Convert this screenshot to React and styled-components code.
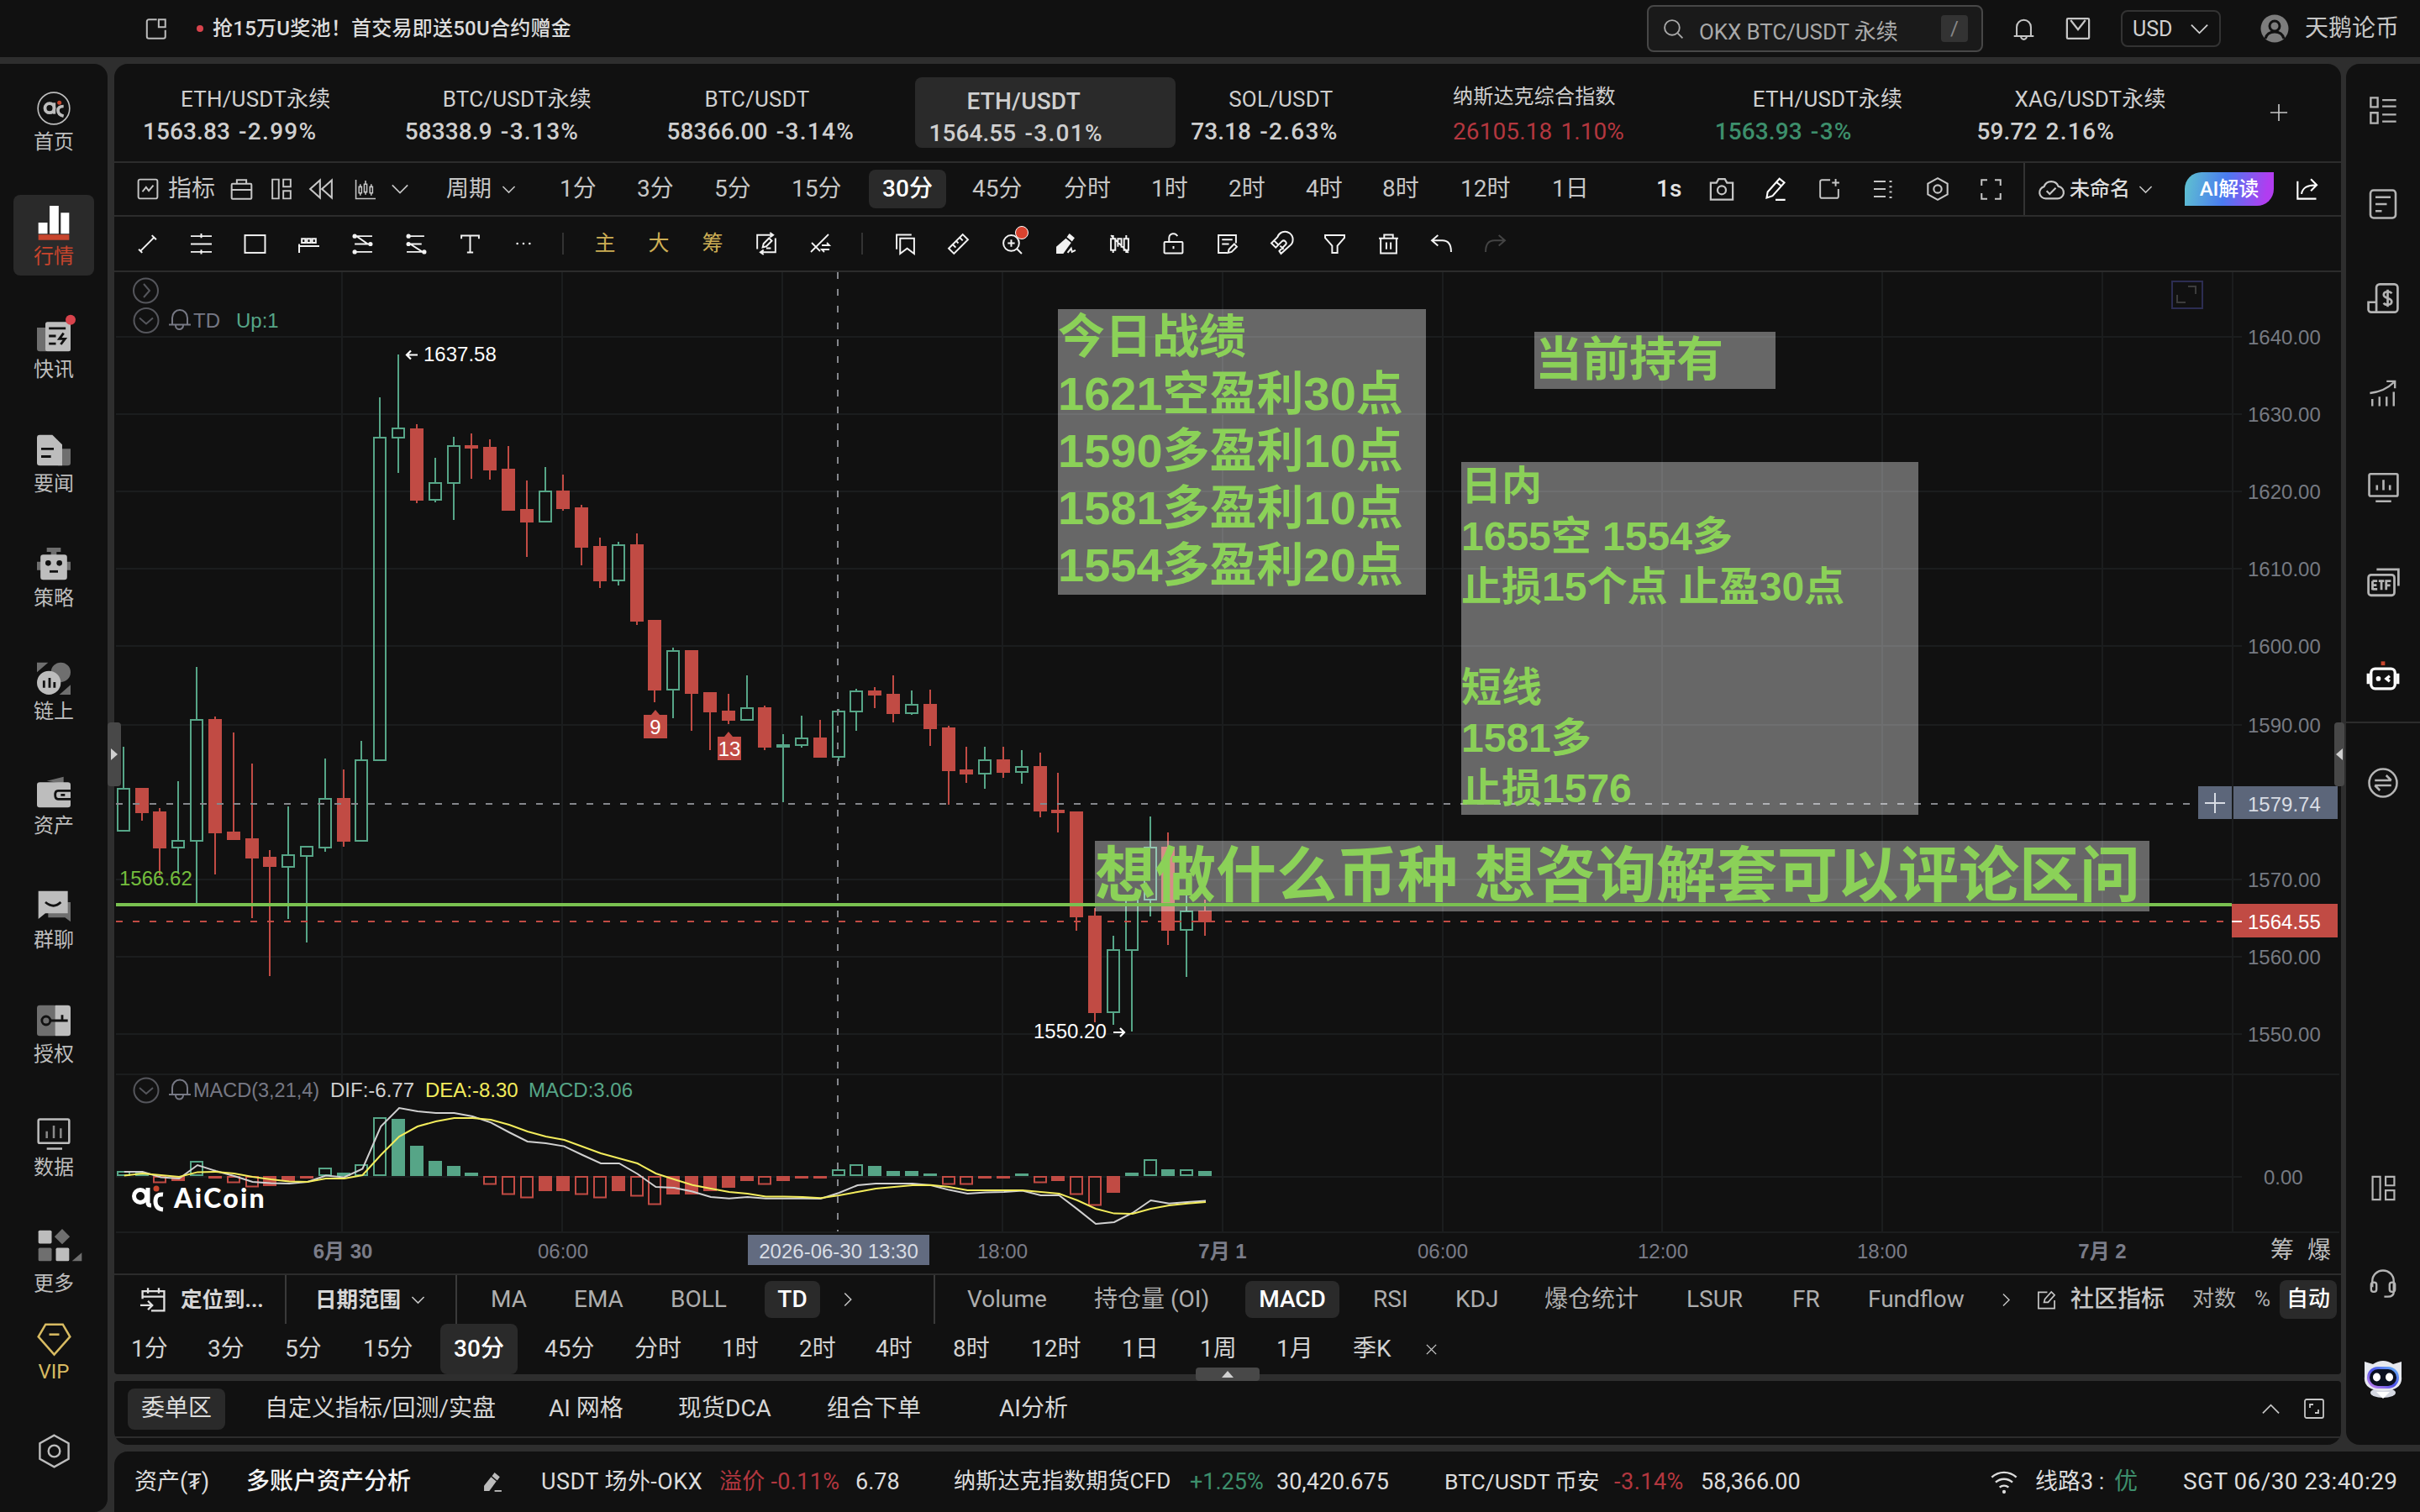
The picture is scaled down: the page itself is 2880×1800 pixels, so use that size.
// App.jsx

import React from 'react';
import styled, { createGlobalStyle } from 'styled-components';

const GlobalStyle = createGlobalStyle`
  * { box-sizing: border-box; }
  html, body { margin: 0; padding: 0; background: #2e2e2e; }
  body {
    width: 2880px;
    height: 1800px;
    overflow: hidden;
    color: #c6c6c6;
    font-family: Roboto, "Noto Sans CJK SC", sans-serif;
    font-size: 28px;
    white-space: pre;
  }
`;

const UP = '#56a587';
const DOWN = '#c14b44';
const CHART_FONT = '"Liberation Sans", "Noto Sans CJK SC", sans-serif';

/* ---------- layout ---------- */

const Page = styled.div`
  width: 2880px;
  height: 1800px;
  display: flex;
  flex-direction: column;
  gap: 8px;
  background: #2e2e2e;
`;

const TopBar = styled.header`
  height: 68px;
  display: flex;
  align-items: center;
  background: #111;
`;

const Body = styled.div`
  flex: 1;
  display: flex;
  gap: 8px;
  min-height: 0;
`;

const Column = styled.div`
  flex: 1;
  display: flex;
  flex-direction: column;
  gap: 8px;
  min-width: 0;
`;

const Upper = styled.div`
  height: 1644px;
  display: flex;
  gap: 6px;
`;

const Center = styled.main`
  width: 2650px;
  display: flex;
  flex-direction: column;
  gap: 8px;
  position: relative;
`;

const ChartPanel = styled.section`
  height: 1560px;
  display: flex;
  flex-direction: column;
  background: #111;
  border-radius: 16px 16px 4px 4px;
`;

const Bar = styled.div`
  height: ${({ $h }) => $h}px;
  display: flex;
  align-items: center;
  padding-left: ${({ $pl }) => $pl || 0}px;
  border-bottom: ${({ $line }) => ($line ? '2px solid #2c2c2c' : 'none')};
  flex-shrink: 0;
`;

const Cell = styled.div`
  width: ${({ $w }) => $w}px;
  flex-shrink: 0;
  display: flex;
  align-items: center;
  justify-content: ${({ $center }) => ($center ? 'center' : 'flex-start')};
  color: ${({ $c }) => $c || 'inherit'};
  font-size: ${({ $fs }) => $fs || 28}px;
  font-weight: ${({ $b }) => $b || 400};
  letter-spacing: ${({ $ls }) => $ls || 0}px;
  line-height: 1.2;
`;

const Chip = styled.span`
  width: ${({ $w }) => $w}px;
  height: ${({ $h }) => $h}px;
  margin-left: ${({ $ml }) => $ml || 0}px;
  flex-shrink: 0;
  display: flex;
  align-items: center;
  justify-content: center;
  border-radius: 8px;
  background: #2a2a2a;
  color: ${({ $soft }) => ($soft ? '#dcdcdc' : '#fff')};
  font-weight: ${({ $soft }) => ($soft ? 400 : 500)};
`;

const Divider = styled.i`
  width: 2px;
  height: ${({ $h }) => $h || 26}px;
  margin-right: ${({ $mr }) => $mr || 0}px;
  margin-left: ${({ $ml }) => $ml || 0}px;
  background: ${({ $c }) => $c || '#333'};
  flex-shrink: 0;
`;

const Spacer = styled.div`
  flex: 1;
`;

/* ---------- icons ---------- */

const Svg = styled.svg`
  width: ${({ $s }) => $s}px;
  height: ${({ $s }) => $s}px;
  margin-left: ${({ $ml }) => $ml || 0}px;
  flex-shrink: 0;
  overflow: visible;
  fill: none;
  stroke: currentColor;
  stroke-width: ${({ $sw }) => $sw};
`;

const solid = { fill: 'currentColor', stroke: 'none' };
const dim = { fill: '#6f6f6f', stroke: 'none' };
const cut = { fill: 'none', stroke: '#111', strokeWidth: 1.7 };

const shapes = {
  panel: <><path d="M13 2H4.5A2 2 0 0 0 2.5 4v16a2 2 0 0 0 2 2H20a2 2 0 0 0 2-2V13" /><path d="M15 2h7v8h-7z" /></>,
  search: <><circle cx="10.5" cy="10.5" r="8.5" /><path d="M17 17l5.500 5.500" /></>,
  bell: <path d="M1.500 19.500h21M4.500 19V10a7.500 7.500 0 0 1 15 0v9M9 20a3 3 0 0 0 6 0" />,
  mail: <><rect x="1.5" y="2.5" width="21" height="19" rx="1" /><path d="M5 4l7 9 7-9" /></>,
  down: <path d="M2 7l10 10L22 7" />,
  up: <path d="M2 17L12 7l10 10" />,
  right: <path d="M7 2l10 10L7 22" />,
  close: <path d="M3 3l18 18M21 3L3 21" />,
  plus: <path d="M12 1v22M1 12h22" />,
  chartBox: <><rect x="1.5" y="1.5" width="21" height="21" rx="2" /><path d="M6 15l4-5 3 4 5-6" /></>,
  bag: <><rect x="1.5" y="6" width="21" height="16" rx="1" /><path d="M7 6V2h10v4M1.500 12.500h21" /></>,
  layout: <path d="M2 1.500h7v21H2zM14 1.500h8v8h-8zM14 14h8v8.500h-8z" />,
  rewind: <path d="M11 3L1 12l10 9zM23 3l-10 9 10 9z" />,
  candles: <><path d="M1.500 1v21.500H24" /><path d="M5 9h3v7H5zM11 6h3v9h-3zM17.500 9h3v7h-3zM6.500 6v3M6.500 16v3M12.500 2v4M12.500 15v3M19 6v3M19 16v3" /></>,
  camera: <><path d="M1.500 6H7l2-3.500h6L17 6h5.500v16h-21z" /><circle cx="12" cy="13" r="4" /></>,
  pencil: <path d="M3 21l1-6L16 1.500l5 4L9 19zM13 5l5 4M12 23h10" />,
  addWin: <path d="M13 2H4a2 2 0 0 0-2 2v16a2 2 0 0 0 2 2h16a2 2 0 0 0 2-2v-8M19 1v8M15 5h8" />,
  list: <><path d="M1 3h14M1 12h14M1 21h14" /><path d="M21 2v21" strokeDasharray="2 4.300" strokeWidth="3" /></>,
  hex: <><path d="M12 1l10 5.500v11L12 23 2 17.500v-11z" /><circle cx="12" cy="12" r="4" /></>,
  full: <path d="M2 8V2h6M16 2h6v6M22 16v6h-6M8 22H2v-6" />,
  cloud: <><path d="M7 21a6 6 0 0 1-1.500-11.800A7.500 7.500 0 0 1 19.500 9 6 6 0 0 1 18 21z" /><path d="M8 13.500l3 3 6-6" /></>,
  share: <path d="M2 4v18h19M6 17c1-6 5-9 15-9M15.500 2l6 6-6 6" />,
  trend: <path d="M4 20L20 4M17 2l5 5M2 18l4 4" />,
  hlines: <path d="M0 3h24M0 12h24M0 21h24M12 0v5M12 18.500v5" />,
  rect: <rect x="0.5" y="2" width="23" height="20" />,
  ruler3: <path d="M0 14.500h24M1 12v10M4 6h4v4.500H4zM10 6h4v4.500h-4zM16 6h4v4.500h-4z" />,
  zig: <><path d="M3 3h20M3 21h20M3 12h17M5 3l13 9" /><circle cx="3" cy="3" r="2.5" {...solid} /><circle cx="21" cy="12" r="2.5" {...solid} /><circle cx="3" cy="21" r="2.5" {...solid} /></>,
  zag: <><path d="M1 3h20M1 12h17M1 21h20M5 12l14 9" /><circle cx="3" cy="3" r="2.5" {...solid} /><circle cx="3" cy="12" r="2.5" {...solid} /><circle cx="21" cy="21" r="2.5" {...solid} /></>,
  text: <path d="M2 6V2.500h20V6M12 2.500v19M8.500 21.500h7" />,
  dots: <><circle cx="4" cy="12" r="1.400" {...solid} /><circle cx="12" cy="12" r="1.400" {...solid} /><circle cx="20" cy="12" r="1.400" {...solid} /></>,
  swapEdit: <path d="M8 2.500H2V18M16 21.500h6V6M8 2.500h11M16 0l3.500 2.500L16 5M16 21.500H6M9 19l-3.500 2.500L9 24M8 16l1-4 6-6 3 3-6 6zM12 17h5" />,
  crossLine: <path d="M1 22L22 1M2 11l10 10M14 14h9l-3-3M23 19h-9l3 3" />,
  bookmark: <><path d="M2 18V1.500h17" /><path d="M6 5.500h16V23l-8-6-8 6z" /></>,
  ruler: <path d="M1 17L17 1l6 6L7 23zM6 13l3 3M10 9l2 2M14 5l3 3" />,
  zoomIn: <><circle cx="11" cy="11" r="9" /><path d="M17.500 17.500L23 23M11 7v8M7 11h8" /></>,
  marker: <><path d="M16 0l6 5-3 4-6-5z" {...solid} /><path d="M12 5.500l6 5L9 23H1v-8z" {...solid} /><path d="M14 22l4-5 1 4 4-2" /></>,
  candleOff: <path d="M2 6h5v13H2zM4.500 2v4M4.500 19v3M17 6h5v13h-5zM19.500 2v4M19.500 19v3M10 15V6h4v10M2 2l20 20" />,
  lock: <><rect x="1.5" y="9.5" width="21" height="13" rx="1" /><path d="M7 9V5a5 5 0 0 1 9.500-2M12 14.500v3" /></>,
  note: <path d="M12 22H2V2h20v9M6 7h12M6 12h8M13 22l1-4 6-6 3 3-6 6z" />,
  magnet: <path d="M12 23l10-9A9 9 0 1 0 8 4L1 11l5 5 7-7a2.800 2.800 0 0 1 4 4l-7 7zM4 8l5 5M15 18l-4-4" />,
  funnel: <path d="M1 2h22v3l-8 9v8h-6v-8L1 5z" />,
  trash: <path d="M1 5.500h22M7 5V1.500h10V5M3 6v16.500h18V6M9.500 10v8M14.500 10v8" />,
  undo: <path d="M8 2L1 8l7 6M1 8h12q10 0 10 13" />,
  redo: <path d="M16 2l7 6-7 6M23 8H11Q1 8 1 21" />,
  locate: <path d="M2 11V4h20v18H10M7 1v5M17 1v5M2 9h20M0 17h10M7 13l4 4-4 4" />,
  edit: <path d="M13 2.500H2v20h20v-10M9 15l1-4 8-9 4 4-8 9z" />,
  expand: <><rect x="1" y="1" width="22" height="22" rx="2" /><path d="M7 11V7h4M17 13v4h-4" /></>,
  wifi: <><path d="M1 8a16 16 0 0 1 22 0M4.500 12.500a11 11 0 0 1 15 0M8 17a6 6 0 0 1 8 0" /><circle cx="12" cy="21" r="1.600" {...solid} /></>,
  smallPen: <><path d="M14 1l6 5-3 4-6-5z" {...solid} /><path d="M10 6l6 5-8 11H2v-6z" {...solid} /><path d="M14 22h8" /></>,
  /* right rail */
  rows: <path d="M1 1h6v8H1zM1 14h6v9H1zM11 3h12M11 8.500h12M11 15.500h12M11 21.500h12" />,
  doc: <><rect x="2" y="1" width="20" height="22" rx="2.500" /><path d="M6 6.500h12M6 12h9M6 17.500h5" /></>,
  money: <><path d="M7 22.500V4a2.500 2.500 0 0 1 2.500-2.500h11A2.500 2.500 0 0 1 23 4v16a2.500 2.500 0 0 1-2.500 2.500H3A2 2 0 0 1 1 20v-5h6" /><path d="M18.500 8.500c-1-2-6-2-6 1s6 2 6 5-5 3-6 1M15.500 5.500v13" /></>,
  growth: <path d="M3 17v6M9 15v8M15 15v8M21 11v12M1 12C10 11 16 8 21 3M15 2h7v6" />,
  monitor: <><rect x="1" y="1.500" width="22" height="17" rx="1" /><path d="M6 22.500h12M7 10v4M12 6v8M17 10v4" /></>,
  etf: <><rect x="1" y="7" width="19" height="15" rx="2" /><path d="M7 3h16v12M4 11.500v6.500M4 11.500h3.500M4 14.500h3M4 17.500h3.500M8.500 11.500h4M10.500 11.500V18M14 18v-6.500h3.500M14 14.700h3" /></>,
  bot: <><rect x="3" y="7" width="18" height="15" rx="3" /><path d="M0.800 10.500v8M23.200 10.500v8" /><path d="M10.500 1.500h3v3h-3z" fill="#c8452d" stroke="none" /><circle cx="8.500" cy="14.500" r="1.800" {...solid} /><path d="M17 12.500l-2.500 2 2.500 2" /></>,
  swap: <><circle cx="12" cy="12" r="11" /><path d="M18.500 10h-13M14.500 6l4 4M5.500 14h13M9.500 18l-4-4" /></>,
  headset: <><path d="M3 15V10a9 9 0 0 1 18 0v9q0 4-5 4h-3" /><rect x="2" y="11" width="4.500" height="8" rx="2" /><rect x="17.500" y="11" width="4.500" height="8" rx="2" /></>,
  /* left nav */
  home: <><circle cx="12" cy="12" r="11.300" strokeWidth="1" /><circle cx="9" cy="11.800" r="3.300" strokeWidth="2.300" /><path d="M12.300 8v8" strokeWidth="2" /><path d="M19 10.500q-4 0-4 3t4 4" strokeWidth="2.200" /><circle cx="16" cy="8" r="1.500" fill="#c8452d" stroke="none" /></>,
  market: <><path d="M1 12h6.500v8H1zM9 0h6.500v20H9zM17 5h6v15h-6z" {...solid} /><path d="M1 20.500h22v4H1z" fill="#c8452d" stroke="none" /></>,
  flash: <><path d="M0 6h7v17H2q-2 0-2-2z" {...dim} /><rect x="6" y="2" width="18" height="21" rx="1.500" {...solid} /><path d="M8.500 6.500h12M8.500 12h5M8.500 17.500h5" {...cut} /><path d="M19 10l-3 4h4l-3 4" {...cut} /><circle cx="24" cy="0.500" r="3.600" fill="#d8434c" stroke="none" /></>,
  news: <><path d="M15 11h9v10q0 2-2 2h-7z" {...dim} /><path d="M2 1h9l7 7v15H2q-2 0-2-2V3q0-2 2-2z" {...solid} /><path d="M3 11h9M3 16.500h7" {...cut} /></>,
  strategy: <><path d="M7 0h10v3h-3v3h-4V3H7zM0 10h3v6H0zM21 10h3v6h-3z" {...dim} /><rect x="2.500" y="5" width="19" height="18" rx="2" {...solid} /><circle cx="8" cy="11" r="2" fill="#111" stroke="none" /><circle cx="16" cy="11" r="2" fill="#111" stroke="none" /><path d="M9 17h6" {...cut} /></>,
  chain: <><circle cx="17" cy="8" r="7" {...dim} /><path d="M0 1h8L0 8zM24 24h-8l8-7z" {...dim} /><circle cx="8.500" cy="15.500" r="8.500" {...solid} /><path d="M5 14v5M9 12v7M12.500 15v4" {...cut} /></>,
  wallet: <><path d="M7 4l12-3v5z" {...dim} /><rect x="0" y="5" width="24" height="18" rx="2" {...solid} /><path d="M24 11h-9q-2 0-2 3t2 3h9M17 14h3" {...cut} /></>,
  chat: <><path d="M8 9h16v14l-4-3H8z" {...dim} /><path d="M1 1h21v16H6l-5 4z" {...solid} /><path d="M6 9q6 5 11 0" {...cut} /></>,
  auth: <><rect x="0" y="1" width="14" height="22" rx="2" {...dim} /><path d="M13 1h9q2 0 2 2v18q0 2-2 2h-9z" {...solid} /><circle cx="6.500" cy="12" r="3" {...cut} /><path d="M10 12h12M18 12V8" {...cut} /></>,
  data: <><rect x="1" y="1.500" width="22" height="17" rx="1" /><path d="M7 22.500h11" /><path d="M7 10v5M12 6v9M17 8v7" stroke="#8a8a8a" /></>,
  more: <><rect x="1" y="1" width="9.500" height="9.500" rx="1" {...solid} /><path d="M18 0l5.500 5.500L18 11l-5.500-5.500z" {...dim} /><rect x="1" y="13.500" width="9.500" height="9.500" rx="1" {...dim} /><rect x="13.500" y="13.500" width="9.500" height="9.500" rx="1" {...solid} /><path d="M32 23v-6l-7 6z" {...dim} /></>,
  vip: <><path d="M6 1h12l5 8.500L12 22 1 9.500z" /><path d="M8.500 8h7" /></>,
};

const Icon = ({ n, s = 26, sw = 1.8, ml }) => (
  <Svg viewBox="0 0 24 24" $s={s} $sw={sw} $ml={ml}>{shapes[n]}</Svg>
);

/* ---------- top bar ---------- */

const Dot = styled.span`
  width: 8px;
  height: 8px;
  border-radius: 50%;
  background: #d8434c;
`;

const SearchBox = styled.div`
  width: 400px;
  height: 56px;
  margin-left: 1280px;
  padding: 0 16px 0 17px;
  display: flex;
  align-items: center;
  border: 2px solid #474747;
  border-radius: 8px;
  background: #1a1a1a;
  font-size: 26px;
  color: #a9a9a9;

  span { flex: 1; padding: 2px 0 0 18px; letter-spacing: -0.1px; }
`;

const Key = styled.kbd`
  width: 32px;
  height: 32px;
  border-radius: 4px;
  background: #333;
  color: #888;
  font: 24px/32px Roboto, sans-serif;
  text-align: center;
`;

const Currency = styled.div`
  width: 119px;
  height: 44px;
  margin: 0 47px 0 36px;
  padding: 0 12px;
  display: flex;
  align-items: center;
  justify-content: space-between;
  border: 2px solid #333;
  border-radius: 8px;
  font-size: 25px;
  color: #d0d0d0;
`;

const Avatar = styled.svg`
  width: 34px;
  height: 34px;
  margin-right: 19px;
`;

const Header = () => (
  <TopBar>
    <Cell $w={234} $c="#bbb"><Icon n="panel" s={27} ml={172} /></Cell>
    <Cell $w={19}><Dot /></Cell>
    <Cell $w={427} $fs={24} $c="#dcdcdc" $b={500} $ls={0.25}>抢15万U奖池！首交易即送50U合约赠金</Cell>
    <SearchBox>
      <Icon n="search" s={25} />
      <span>OKX BTC/USDT 永续</span>
      <Key>/</Key>
    </SearchBox>
    <Icon n="bell" s={27} ml={35} />
    <Icon n="mail" s={30} ml={36} />
    <Currency>USD<Icon n="down" s={23} sw={1.9} /></Currency>
    <Avatar viewBox="0 0 34 34">
      <circle cx="17" cy="17" r="16.5" fill="#7d7d7d" />
      <circle cx="17" cy="14" r="6" fill="none" stroke="#111" strokeWidth="3" />
      <path d="M6 29q2-8 11-8t11 8" fill="none" stroke="#111" strokeWidth="3" />
    </Avatar>
    <Cell $w={120}>天鹅论币</Cell>
  </TopBar>
);

/* ---------- side rails ---------- */

const Nav = styled.nav`
  width: 128px;
  padding-top: 20px;
  background: #111;
  border-radius: 0 16px 16px 0;
  display: flex;
  flex-direction: column;
  align-items: center;
`;

const NavItem = styled.a`
  width: 96px;
  height: 96px;
  margin-bottom: ${({ $mb }) => $mb || 39.7}px;
  padding-top: 13px;
  display: flex;
  flex-direction: column;
  align-items: center;
  gap: ${({ $gap }) => $gap || 6}px;
  flex-shrink: 0;
  border-radius: 8px;
  background: ${({ $on }) => ($on ? '#2a2a2a' : 'none')};
  color: ${({ $vip }) => ($vip ? '#d8bb62' : '#bdbdbd')};
  font-size: 24px;
  line-height: 28px;

  span { color: ${({ $on }) => ($on ? '#c8452d' : 'inherit')}; }
  svg { color: ${({ $on }) => ($on ? '#fff' : 'inherit')}; }
`;

const navItems = [
  ['home', '首页'], ['market', '行情'], ['flash', '快讯'], ['news', '要闻'],
  ['strategy', '策略'], ['chain', '链上'], ['wallet', '资产'], ['chat', '群聊'],
  ['auth', '授权'], ['data', '数据', 37], ['more', '更多', 16, 11],
];

const LeftNav = () => (
  <Nav>
    {navItems.map(([icon, label, mb, gap]) => (
      <NavItem key={label} $on={icon === 'market'} $mb={mb} $gap={gap}>
        <Icon n={icon} s={40} sw={1.5} />
        <span>{label}</span>
      </NavItem>
    ))}
    <NavItem $vip $mb={36} $gap={3}><Icon n="vip" s={41} sw={1.5} /><span>VIP</span></NavItem>
    <NavItem><Icon n="hex" s={41} sw={1.4} /></NavItem>
  </Nav>
);

const Rail = styled.aside`
  width: 88px;
  padding-bottom: 21px;
  background: #111;
  border-radius: 16px 0 0 16px;
  display: flex;
  flex-direction: column;
  color: #b4b4b4;
`;

const RailItem = styled.div`
  height: ${({ $h }) => $h || 112.3}px;
  flex-shrink: 0;
  display: flex;
  align-items: center;
  justify-content: center;
  border-top: ${({ $line }) => ($line ? '2px solid #2c2c2c' : 'none')};
  color: ${({ $c }) => $c || 'inherit'};
`;

const Mascot = () => (
  <svg width="48" height="48" viewBox="0 0 48 48">
    <defs>
      <linearGradient id="visor" x1="1" y1="0" x2="0" y2="1">
        <stop offset="0" stopColor="#6fc3ff" />
        <stop offset="0.5" stopColor="#4d52e8" />
        <stop offset="1" stopColor="#d88cf0" />
      </linearGradient>
    </defs>
    <ellipse cx="24" cy="40" rx="15" ry="6" fill="#d5d8e2" />
    <path d="M24 47l-8-8h16z" fill="#fff" />
    <path d="M2 3l10 3q12-8 24 0l10-3v18q2 16-22 17Q0 37 2 21z" fill="#e6e8ee" />
    <rect x="5" y="9" width="38" height="26" rx="13" fill="url(#visor)" />
    <rect x="8" y="12" width="32" height="20" rx="10" fill="#0a1020" />
    <ellipse cx="16.5" cy="21.5" rx="4.5" ry="5" fill="#fff" />
    <ellipse cx="31.5" cy="21.5" rx="4.5" ry="5" fill="#fff" />
  </svg>
);

const railIcons = [['rows', 33], ['doc', 36], ['money', 38], ['growth', 34], ['monitor', 37], ['etf', 39]];

const RightRail = () => (
  <Rail>
    {railIcons.map(([n, s], i) => (
      <RailItem key={n} $h={i ? 112.3 : 111}><Icon n={n} s={s} sw={1.7} /></RailItem>
    ))}
    <RailItem $h={111} $c="#fff"><Icon n="bot" s={38} sw={2.1} /></RailItem>
    <RailItem $h={143} $line><Icon n="swap" s={36} sw={1.7} /></RailItem>
    <Spacer />
    <RailItem $h={113}><Icon n="layout" s={31} sw={1.7} /></RailItem>
    <RailItem $h={114}><Icon n="headset" s={34} sw={1.7} /></RailItem>
    <RailItem $h={114}><Mascot /></RailItem>
  </Rail>
);

/* ---------- tickers ---------- */

const Ticker = styled.div`
  width: 310px;
  height: 84px;
  margin-right: 1.8px;
  padding: ${({ $on }) => ($on ? '12px' : '10px')} 0 0 16px;
  border-radius: 8px;
  background: ${({ $on }) => ($on ? '#2a2a2a' : 'none')};
  font-size: 28px;
  font-weight: ${({ $flat }) => ($flat ? 400 : 500)};
  line-height: 38px;
  letter-spacing: 0.1px;
  word-spacing: 3px;
  color: ${({ $c }) => $c || '#cfcfcf'};
  flex-shrink: 0;

  em { font-style: normal; letter-spacing: ${({ $flat }) => ($flat ? 0.1 : 1.3)}px; }
`;

const TickerName = styled.div`
  height: 36px;
  padding-left: ${({ $flat }) => ($flat ? 0 : 45)}px;
  font-size: ${({ $flat, $on }) => ($flat ? 24 : $on ? 28 : 26)}px;
  font-weight: ${({ $on }) => ($on ? 500 : 400)};
  line-height: ${({ $flat }) => ($flat ? 26 : 33)}px;
  letter-spacing: 0.2px;
  color: #cfcfcf;
`;

const tickers = [
  ['ETH/USDT永续', '1563.83', '-2.99%'],
  ['BTC/USDT永续', '58338.9', '-3.13%'],
  ['BTC/USDT', '58366.00', '-3.14%'],
  ['ETH/USDT', '1564.55', '-3.01%'],
  ['SOL/USDT', '73.18', '-2.63%'],
  ['纳斯达克综合指数', '26105.18', '1.10%', '#b3373f'],
  ['ETH/USDT永续', '1563.93', '-3%', '#3d8f6c'],
  ['XAG/USDT永续', '59.72', '2.16%'],
];

const Tickers = () => (
  <Bar $h={118} $pl={18} $line>
    {tickers.map(([name, price, pct, c], i) => (
      <Ticker key={i} $on={i === 3} $flat={i === 5} $c={c}>
        <TickerName $flat={i === 5} $on={i === 3}>{name}</TickerName>
        {price} <em>{pct}</em>
      </Ticker>
    ))}
    <Icon n="plus" s={22} ml={53} sw={1.8} />
  </Bar>
);

/* ---------- toolbars ---------- */

const AiBadge = styled.div`
  width: 106px;
  height: 40px;
  margin: 0 26px 0 38px;
  border-radius: 20px 0 20px 0;
  background: linear-gradient(100deg, #5fc3cf 0%, #4a7bf0 45%, #b13df0 90%);
  color: #fff;
  font-size: 24px;
  font-weight: 500;
  line-height: 40px;
  text-align: center;
`;

const periods = [
  ['1分', 92], ['3分', 92], ['5分', 92], ['15分', 108], ['30分', 107], ['45分', 109],
  ['分时', 104], ['1时', 92], ['2时', 92], ['4时', 91], ['8时', 93], ['12时', 109], ['1日', 124],
];

const Toolbar = () => (
  <Bar $h={64} $pl={27} $line>
    <Cell $w={37}><Icon n="chartBox" /></Cell>
    <Cell $w={74}>指标</Cell>
    <Cell $w={48}><Icon n="bag" s={27} /></Cell>
    <Cell $w={46}><Icon n="layout" /></Cell>
    <Cell $w={54}><Icon n="rewind" s={28} /></Cell>
    <Cell $w={43}><Icon n="candles" s={25} sw={1.5} /></Cell>
    <Cell $w={66}><Icon n="down" s={22} /></Cell>
    <Cell $w={66} $fs={27}>周期</Cell>
    <Cell $w={69}><Icon n="down" s={17} sw={2.2} /></Cell>
    {periods.map(([label, w]) => (
      <Cell key={label} $w={w}>
        {label === '30分' ? <Chip $w={92} $h={46} $ml={-16}>{label}</Chip> : label}
      </Cell>
    ))}
    <Cell $w={63} $c="#e4e4e4" $b={500}>1s</Cell>
    <Cell $w={65}><Icon n="camera" s={30} /></Cell>
    <Cell $w={65} $c="#fff"><Icon n="pencil" s={28} /></Cell>
    <Cell $w={65}><Icon n="addWin" /></Cell>
    <Cell $w={63}><Icon n="list" s={24} /></Cell>
    <Cell $w={64}><Icon n="hex" s={28} /></Cell>
    <Cell $w={52}><Icon n="full" s={27} /></Cell>
    <Divider $h={62} $mr={16} />
    <Cell $w={37}><Icon n="cloud" s={29} /></Cell>
    <Cell $w={82} $fs={24} $b={500} $c="#dcdcdc">未命名</Cell>
    <Icon n="down" s={17} sw={2.2} />
    <AiBadge>AI解读</AiBadge>
    <Cell $w={30} $c="#fff"><Icon n="share" s={28} /></Cell>
  </Bar>
);

const RedDot = styled.i`
  position: absolute;
  top: -9px;
  right: -7px;
  width: 16px;
  height: 16px;
  border: 1.5px solid #fff;
  border-radius: 50%;
  background: #d8432f;
`;

const Badged = styled.span`
  position: relative;
  display: flex;
`;

const toolsA = ['trend', 'hlines', 'rect', 'ruler3', 'zig', 'zag', 'text', 'dots'];
const toolsC = ['bookmark', 'ruler', 'zoomIn', 'marker', 'candleOff', 'lock', 'note', 'magnet', 'funnel', 'trash', 'undo', 'redo'];

const DrawBar = () => (
  <Bar $h={66} $pl={8} $line>
    {toolsA.map((n) => (
      <Cell key={n} $w={63.9} $center $c="#f2f2f2"><Icon n={n} s={n === 'dots' ? 22 : 25} sw={1.9} /></Cell>
    ))}
    <Divider $ml={14} $mr={17} />
    {['主', '大', '筹'].map((t) => <Cell key={t} $w={64} $center $fs={25} $c="#cdae55">{t}</Cell>)}
    <Cell $w={64} $center $c="#f2f2f2"><Icon n="swapEdit" /></Cell>
    <Cell $w={64} $center $c="#f2f2f2"><Icon n="crossLine" s={24} /></Cell>
    <Divider $ml={17} $mr={18} />
    {toolsC.map((n) => (
      <Cell key={n} $w={63.9} $center $c={n === 'redo' ? '#444' : '#f2f2f2'}>
        <Badged><Icon n={n} s={25} sw={1.9} />{n === 'zoomIn' && <RedDot />}</Badged>
      </Cell>
    ))}
  </Bar>
);

/* ---------- chart ---------- */

// direction, body top, body bottom, wick top, wick bottom
const bars = [
  [1, 939, 989, 889, 989], [0, 938, 968, 938, 977], [0, 966, 1010, 962, 1042], [1, 1001, 1009, 930, 1039],
  [1, 857, 1001, 794, 1075], [0, 856, 992, 853, 1041], [0, 990, 1000, 872, 1000], [0, 998, 1022, 909, 1093],
  [0, 1020, 1032, 1012, 1162], [1, 1018, 1032, 960, 1094], [1, 1008, 1019, 1008, 1122], [1, 951, 1009, 903, 1014],
  [0, 950, 1002, 916, 1008], [1, 905, 1001, 882, 1001], [1, 521, 905, 473, 905], [1, 510, 521, 422, 563],
  [0, 510, 596, 505, 599], [1, 575, 595, 545, 598], [1, 531, 575, 520, 619], [0, 530, 534, 516, 570],
  [0, 532, 560, 523, 571], [0, 558, 608, 531, 608], [0, 606, 622, 572, 663], [1, 585, 621, 556, 621],
  [0, 584, 606, 565, 608], [0, 604, 652, 601, 673], [0, 650, 692, 640, 700], [1, 649, 691, 645, 697],
  [0, 648, 740, 635, 744], [0, 738, 822, 738, 836], [1, 775, 821, 771, 855], [0, 774, 826, 774, 870],
  [0, 824, 848, 824, 893], [0, 846, 858, 826, 862], [1, 843, 857, 804, 857], [0, 842, 890, 840, 893],
  [1, 887, 889, 874, 955], [1, 879, 887, 852, 890], [0, 878, 902, 857, 902], [1, 847, 901, 844, 906],
  [1, 823, 847, 820, 870], [0, 822, 828, 818, 843], [0, 826, 850, 804, 860], [1, 839, 849, 822, 851],
  [0, 838, 868, 821, 888], [0, 866, 918, 864, 958], [0, 916, 922, 889, 932], [1, 905, 921, 889, 939],
  [0, 904, 920, 889, 926], [1, 913, 919, 893, 933], [0, 912, 966, 896, 973], [0, 964, 968, 920, 991],
  [0, 966, 1092, 966, 1108], [0, 1090, 1206, 1081, 1217], [1, 1131, 1205, 1114, 1220], [1, 1071, 1131, 1071, 1228],
  [1, 1009, 1071, 972, 1091], [0, 1008, 1108, 991, 1125], [1, 1085, 1107, 1066, 1163], [0, 1084, 1098, 1071, 1114],
];

// g/r filled, G/R hollow, then the far edge of the column
const hist = [
  'G1395', 'g1396', 'R1407', 'r1406', 'G1383', 'r1402', 'R1407', 'R1412', 'r1412', 'r1406', 'r1402', 'G1391',
  'g1396', 'G1387', 'G1331', 'g1332', 'g1364', 'g1382', 'g1388', 'g1396', 'R1409', 'R1421', 'R1425', 'r1418',
  'r1418', 'R1421', 'R1425', 'r1418', 'R1423', 'R1433', 'r1422', 'r1422', 'r1418', 'r1414', 'r1406', 'R1409',
  'r1406', 'r1403', 'r1403', 'G1393', 'G1387', 'g1388', 'g1394', 'g1394', 'g1397', 'R1409', 'R1409', 'r1403',
  'r1403', 'g1397', 'R1407', 'r1406', 'R1421', 'R1434', 'r1420', 'g1396', 'G1381', 'g1392', 'G1393', 'g1394',
];

const dif = [
  1395, 1395, 1401.4, 1403, 1387, 1394, 1400, 1407, 1408.5, 1409, 1407, 1399.6, 1401.4, 1391.4, 1341, 1319,
  1323, 1325, 1325, 1329, 1336.4, 1348, 1359, 1361, 1364.6, 1375, 1385, 1385, 1397.5, 1413, 1414, 1418.5,
  1425, 1426.7, 1425, 1426.7, 1426.7, 1426.7, 1427, 1420, 1411, 1409, 1409, 1409, 1411, 1416.6, 1421, 1419.4,
  1419, 1417.5, 1423, 1423, 1439.6, 1457, 1455, 1444, 1429, 1432.7, 1431, 1429.5,
];

const dea = [
  1399.6, 1397, 1399, 1401, 1395.4, 1395, 1397, 1401, 1404, 1406.4, 1407, 1403, 1403, 1399, 1375, 1353,
  1341, 1335, 1331, 1331, 1333, 1339, 1347, 1353, 1357, 1365, 1373, 1379, 1385, 1397, 1404, 1410.7,
  1415, 1419, 1421, 1424.4, 1424.4, 1425, 1426.3, 1423, 1419, 1415, 1413, 1411, 1410.7, 1413, 1417, 1417,
  1417, 1417, 1419, 1421, 1429, 1439, 1444.6, 1445, 1439, 1435, 1432.7, 1431,
];

const xAt = (i) => 146.8 + i * 21.817;
const line = (pts) => pts.map((y, i) => `${xAt(i) + 1},${y}`).join(' ');

const prices = [
  ['1640.00', 401], ['1630.00', 493], ['1620.00', 585], ['1610.00', 677], ['1600.00', 769],
  ['1590.00', 863], ['1570.00', 1047], ['1560.00', 1139], ['1550.00', 1231],
];
const times = [
  ['6月 30', 408, 1], ['06:00', 670], ['18:00', 1193], ['7月 1', 1455, 1],
  ['06:00', 1717], ['12:00', 1979], ['18:00', 2240], ['7月 2', 2502, 1],
];

const ChartArea = styled.div`
  position: relative;
  height: 1194px;
  border-bottom: 2px solid #2c2c2c;
  flex-shrink: 0;
`;

const ChartSvg = styled.svg`
  display: block;
  font-family: ${CHART_FONT};
  font-size: 24px;
`;

// text annotations dropped on the chart canvas
const Note = styled.div`
  position: absolute;
  left: ${({ $x }) => $x - 136}px;
  top: ${({ $y }) => $y - 324}px;
  width: ${({ $w }) => $w}px;
  height: ${({ $h }) => $h}px;
  padding-left: ${({ $pl }) => $pl || 0}px;
  background: rgba(255, 255, 255, 0.365);
  color: #8bd158;
  font-family: ${CHART_FONT};
  font-weight: 700;
  font-size: ${({ $fs }) => $fs}px;
  line-height: ${({ $lh }) => $lh}px;

  p { margin: -1px 0 0; }
`;

const OrderLine = styled.i`
  position: absolute;
  left: 2px;
  top: 751px;
  width: 2518px;
  height: 4px;
  background: #7ac150;
`;

const Legend = ({ y, children }) => (
  <g>
    <g fill="none" stroke="#55565c" strokeWidth="2">
      <circle cx="174" cy={y} r="14.5" />
      <path d={`M166 ${y - 3}l8 7 8-7`} />
      <path stroke="#767884" d={`M201 ${y + 5}h26M205 ${y + 5}v-8a9 9.500 0 0 1 18 0v8M209 ${y + 6}a4.500 4.500 0 0 0 9 0`} />
    </g>
    {children}
  </g>
);

const Chart = () => (
  <ChartArea>
    <ChartSvg width="2650" height="1190" viewBox="136 324 2650 1190">
      <g stroke="#1b1d1e" strokeWidth="2">
        {[407, 669, 931, 1193, 1455, 1717, 1978, 2240, 2502, 2657].map((x) => <path key={x} d={`M${x} 324V1466`} />)}
        {prices.map(([, y]) => <path key={y} d={`M138 ${y}H2668`} />)}
        <path d="M138 1279H2784M138 1401H2668M138 1467H2784" />
      </g>

      {bars.map(([up, t, b, hi, lo], i) => {
        const x = Math.round(xAt(i));
        return up ? (
          <g key={i} stroke={UP} strokeWidth="2" fill="none">
            <path d={`M${x} ${hi}V${t}M${x} ${b}V${lo}`} />
            <rect x={x - 7} y={t} width="14" height={b - t} />
          </g>
        ) : (
          <g key={i} fill={DOWN}>
            <rect x={x - 1} y={hi} width="2" height={lo - hi} />
            <rect x={x - 8} y={t} width="16" height={b - t} />
          </g>
        );
      })}

      {hist.map((h, i) => {
        const y = +h.slice(1);
        const up = h[0].toLowerCase() === 'g';
        const hollow = h[0] === 'G' || h[0] === 'R';
        const top = up ? y : 1400;
        const hgt = Math.max(up ? 1400 - y : y - 1400, 3);
        const x = Math.round(xAt(i));
        const c = up ? UP : DOWN;
        return hollow
          ? <rect key={i} x={x - 7} y={up ? top : 1401} width="14" height={up ? hgt - 1 : hgt - 0.5} fill="none" stroke={c} strokeWidth="2" />
          : <rect key={i} x={x - 8} y={top} width="16" height={hgt} fill={c} />;
      })}
      <polyline points={line(dif)} fill="none" stroke="#d0d0d0" strokeWidth="2" />
      <polyline points={line(dea)} fill="none" stroke="#f3ec5c" strokeWidth="2" />

      <path d="M997 324V1466M138 957H2616" stroke="#85878c" strokeWidth="2" strokeDasharray="8 12" />
      <path d="M138 1097H2656" stroke={DOWN} strokeWidth="2" strokeDasharray="8 12" />

      <g fill="#fff">
        <text x="504" y="430">1637.58</text>
        <text x="1230" y="1236">1550.20</text>
        <path d="M484 422.500h13M489 417.500l-5 5 5 5M1325 1229h13M1333 1224l5 5-5 5" stroke="#fff" strokeWidth="2.2" fill="none" />
      </g>
      <text x="142" y="1054" fill="#74bd3d">1566.62</text>

      <path d="M766 851h9l5-6 5 6h9v28h-28z" fill={DOWN} />
      <path d="M854 877h8l5-6 5 6h10v28h-28z" fill={DOWN} />
      <g fill="#fff" textAnchor="middle">
        <text x="780" y="874">9</text>
        <text x="868" y="900">13</text>
      </g>

      <g fill="none" stroke="#55565c" strokeWidth="2">
        <circle cx="173.5" cy="346" r="14.5" />
        <path d="M171 338l7 8-7 8" />
      </g>
      <Legend y={381.5}>
        <text x="230" y="390" fill="#767884">TD</text>
        <text x="281" y="390" fill={UP}>Up:1</text>
      </Legend>
      <Legend y={1298}>
        <text x="230" y="1306" fill="#767884" fontSize="23.500">MACD(3,21,4)</text>
        <text x="393" y="1306" fill="#d0d0d0">DIF:-6.77</text>
        <text x="506" y="1306" fill="#f3ec5c">DEA:-8.30</text>
        <text x="629" y="1306" fill={UP}>MACD:3.06</text>
      </Legend>

      <g fill="none" stroke="#fff" strokeWidth="5">
        <circle cx="167" cy="1424" r="7.5" />
        <path d="M176 1414v18q0 3 4 3" />
        <path d="M194 1422q-9-1-9 8t9 10" />
        <circle cx="186" cy="1415" r="3.5" fill="#c8452d" stroke="none" />
      </g>
      <text x="207" y="1438" fill="#fff" fontFamily="Lato, sans-serif" fontWeight="900" fontSize="32" letterSpacing="2.300">AiCoin</text>

      <g fill="#767a82">
        {prices.map(([p, y]) => <text key={p} x="2675" y={y + 9}>{p}</text>)}
        <text x="2694" y="1410">0.00</text>
      </g>
      <g fill="#7a7c88" textAnchor="middle">
        {times.map(([t, x, bold]) => <text key={x} x={x} y="1498" fontWeight={bold ? 700 : 400}>{t}</text>)}
      </g>
      <rect x="890" y="1470" width="216" height="36" fill="#626b80" />
      <text x="998" y="1498" fill="#d8dce4" textAnchor="middle">2026-06-30 13:30</text>
      <text x="2702" y="1498" fontSize="28" fill="#bdbdbd">筹</text>
      <text x="2746" y="1498" fontSize="28" fill="#bdbdbd">爆</text>

      <rect x="2616" y="936" width="40" height="39" fill="#5c667a" />
      <rect x="2658" y="936" width="124" height="39" fill="#5c667a" />
      <path d="M2624 956h24M2636 944v24" stroke="#d8dce4" strokeWidth="2" />
      <text x="2675" y="966" fill="#d8dce4">1579.74</text>
      <rect x="2656" y="1076" width="126" height="40" fill={DOWN} />
      <path d="M2656 1097h12" stroke="#fff" strokeWidth="2" />
      <text x="2675" y="1106" fill="#fff">1564.55</text>

      <rect x="2585" y="335" width="36" height="32" fill="none" stroke="#2c2d52" strokeWidth="2" />
      <path d="M2604 341h9v9M2601 360h-10v-9" fill="none" stroke="#3c3c3c" strokeWidth="2" />
    </ChartSvg>

    <Note $x={1259} $y={368} $w={438} $h={340} $fs={56} $lh={68}>
      <p>{'今日战绩\n1621空盈利30点\n1590多盈利10点\n1581多盈利10点\n1554多盈利20点'}</p>
    </Note>
    <Note $x={1826} $y={395} $w={287} $h={68} $fs={56} $lh={68} $pl={1}><p>当前持有</p></Note>
    <Note $x={1739} $y={550} $w={544} $h={420} $fs={48} $lh={60}>
      <p>{'日内\n1655空 1554多\n止损15个点 止盈30点\n\n短线\n1581多\n止损1576'}</p>
    </Note>
    <Note $x={1303} $y={1001} $w={1255} $h={84} $fs={72} $lh={84}><p>想做什么币种 想咨询解套可以评论区问</p></Note>
    <OrderLine />
  </ChartArea>
);

/* ---------- bottom bars ---------- */

const indicators = [
  ['Volume', 151], ['持仓量 (OI)', 195], ['MACD', 137], ['RSI', 98], ['KDJ', 106],
  ['爆仓统计', 169], ['LSUR', 126], ['FR', 90], ['Fundflow', 156],
];

const IndicatorBar = () => (
  <Bar $h={58} $pl={31}>
    <Cell $w={48} $c="#e0e0e0"><Icon n="locate" s={31} /></Cell>
    <Cell $w={124} $fs={25.5} $b={700} $c="#d6d6d6">定位到...</Cell>
    <Divider $h={58} $mr={34} $c="#3a3a3a" />
    <Cell $w={114} $fs={25.5} $b={700} $c="#d6d6d6">日期范围</Cell>
    <Cell $w={53}><Icon n="down" s={17} sw={2.2} /></Cell>
    <Divider $h={58} $mr={40} $c="#3a3a3a" />
    <Cell $w={99} $c="#aeaeae">MA</Cell>
    <Cell $w={115} $c="#aeaeae">EMA</Cell>
    <Cell $w={127} $c="#aeaeae">BOLL</Cell>
    <Cell $w={75}><Chip $w={66} $h={44} $ml={-15}>TD</Chip></Cell>
    <Cell $w={111}><Icon n="right" s={18} sw={2} /></Cell>
    <Divider $h={58} $mr={38} $c="#3a3a3a" />
    {indicators.map(([label, w]) => (
      <Cell key={label} $w={w} $c="#aeaeae">
        {label === 'MACD' ? <Chip $w={112} $h={44} $ml={-15}>{label}</Chip> : label}
      </Cell>
    ))}
    <Cell $w={45}><Icon n="right" s={17} sw={2} /></Cell>
    <Cell $w={40}><Icon n="edit" s={23} /></Cell>
    <Cell $w={145} $b={500}>社区指标</Cell>
    <Cell $w={74} $fs={26} $c="#aeaeae">对数</Cell>
    <Cell $w={30} $fs={26} $c="#aeaeae">%</Cell>
    <Cell $w={68} $fs={26}><Chip $w={68} $h={46}>自动</Chip></Cell>
  </Bar>
);

const periodTabs = [
  ['1分', 91], ['3分', 92], ['5分', 93], ['15分', 108], ['30分', 108], ['45分', 107], ['分时', 104],
  ['1时', 92], ['2时', 91], ['4时', 92], ['8时', 93], ['12时', 108], ['1日', 93], ['1周', 91], ['1月', 91], ['季K', 86],
];

const PeriodBar = () => (
  <Bar $h={60} $pl={20}>
    {periodTabs.map(([label, w]) => (
      <Cell key={label} $w={w} $c="#d2d2d2">
        {label === '30分' ? <Chip $w={92} $h={60} $ml={-16}>{label}</Chip> : label}
      </Cell>
    ))}
    <Icon n="close" s={15} sw={2.2} />
  </Bar>
);

const OrderPanel = styled.section`
  height: 76px;
  background: #111;
  border-radius: 4px 4px 16px 16px;
`;

const OrderTabs = () => (
  <OrderPanel>
    <Bar $h={68} $pl={16} $line>
      <Cell $w={163}><Chip $soft $w={116} $h={49}>委单区</Chip></Cell>
      <Cell $w={338} $c="#d6d6d6">自定义指标/回测/实盘</Cell>
      <Cell $w={154} $c="#d6d6d6">AI 网格</Cell>
      <Cell $w={177} $c="#d6d6d6">现货DCA</Cell>
      <Cell $w={205} $c="#d6d6d6">组合下单</Cell>
      <Cell $w={120} $c="#d6d6d6">AI分析</Cell>
      <Spacer />
      <Cell $w={51}><Icon n="up" s={23} /></Cell>
      <Cell $w={44}><Icon n="expand" s={24} /></Cell>
    </Bar>
  </OrderPanel>
);

const StatusBar = styled.footer`
  height: 72px;
  padding-left: 24px;
  display: flex;
  align-items: center;
  background: #111;
  border-radius: 16px 0 0 0;
  color: #dcdcdc;
`;

const Status = () => (
  <StatusBar>
    <Cell $w={133} $fs={27}>资产(₮)</Cell>
    <Cell $w={281} $b={500} $c="#f4f4f4">多账户资产分析</Cell>
    <Cell $w={70} $c="#bbb"><Icon n="smallPen" s={25} /></Cell>
    <Cell $w={212} $fs={27} $ls={0.45}>USDT 场外-OKX</Cell>
    <Cell $w={162} $fs={27} $c="#b3373f" $ls={0.3}>溢价 -0.11%</Cell>
    <Cell $w={117} $fs={27}>6.78</Cell>
    <Cell $w={281} $fs={26} $ls={0.2}>纳斯达克指数期货CFD</Cell>
    <Cell $w={103} $fs={27} $c="#3d8f6c">+1.25%</Cell>
    <Cell $w={200} $fs={27}>30,420.675</Cell>
    <Cell $w={202} $fs={26.5}>BTC/USDT 币安</Cell>
    <Cell $w={103} $fs={27} $c="#b3373f" $ls={0.5}>-3.14%</Cell>
    <Cell $w={345} $fs={27}>58,366.00</Cell>
    <Cell $w={53}><Icon n="wifi" s={32} /></Cell>
    <Cell $w={94} $fs={27}>线路3 : </Cell>
    <Cell $w={82} $c="#3d8f6c">优</Cell>
    <Cell $w={270} $ls={0.4}>SGT 06/30 23:40:29</Cell>
  </StatusBar>
);

/* ---------- drag handles on the panel edges ---------- */

const Handle = styled.div`
  position: absolute;
  left: ${({ $x }) => $x}px;
  top: ${({ $y }) => $y}px;
  width: ${({ $w }) => $w}px;
  height: ${({ $h }) => $h}px;
  border-radius: 4px;
  background: #484848;
  display: flex;
  align-items: center;
  justify-content: center;
  color: #d0d0d0;
`;

const App = () => (
  <Page>
    <GlobalStyle />
    <Header />
    <Body>
      <LeftNav />
      <Column>
        <Upper>
          <Center>
            <ChartPanel>
              <Tickers />
              <Toolbar />
              <DrawBar />
              <Chart />
              <IndicatorBar />
              <PeriodBar />
            </ChartPanel>
            <OrderTabs />
            <Handle $x={-8} $y={784} $w={16} $h={76}>
              <svg width="8" height="14"><path d="M0 0l8 7-8 7z" fill="currentColor" /></svg>
            </Handle>
            <Handle $x={2642} $y={784} $w={12} $h={76}>
              <svg width="8" height="14"><path d="M8 0L0 7l8 7z" fill="currentColor" /></svg>
            </Handle>
            <Handle $x={1287} $y={1552} $w={76} $h={16}>
              <svg width="14" height="8"><path d="M0 8l7-8 7 8z" fill="currentColor" /></svg>
            </Handle>
          </Center>
          <RightRail />
        </Upper>
        <Status />
      </Column>
    </Body>
  </Page>
);

export default App;
